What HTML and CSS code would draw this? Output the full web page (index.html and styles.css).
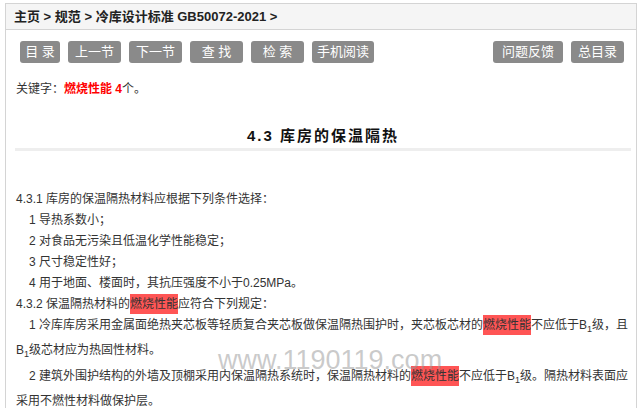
FILE: index.html
```html
<!DOCTYPE html>
<html>
<head>
    <meta charset="utf-8">
    <title>冷库设计标准 GB50072-2021</title>
    <link rel="stylesheet" href="styles.css">
</head>
<body>
    <div class="wrap">
        <div class="crumb">主页 &gt; 规范 &gt; 冷库设计标准 GB50072-2021 &gt;</div>

        <div class="tools">
            <div class="tools-left">
                <a class="btn btn-short" href="#">目 录</a>
                <a class="btn" href="#">上一节</a>
                <a class="btn" href="#">下一节</a>
                <a class="btn" href="#">查 找</a>
                <a class="btn" href="#">检 索</a>
                <a class="btn btn-mid" href="#">手机阅读</a>
            </div>
            <div class="tools-right">
                <a class="btn btn-wide" href="#">问题反馈</a>
                <a class="btn" href="#">总目录</a>
            </div>
        </div>

        <div class="keyword">关键字：<b>燃烧性能 4</b>个。</div>

        <h2 class="title">4.3 库房的保温隔热</h2>

        <div class="content">
            <p>4.3.1 库房的保温隔热材料应根据下列条件选择：</p>
            <p class="ind">1 导热系数小；</p>
            <p class="ind">2 对食品无污染且低温化学性能稳定；</p>
            <p class="ind">3 尺寸稳定性好；</p>
            <p class="ind">4 用于地面、楼面时，其抗压强度不小于0.25MPa。</p>
            <p>4.3.2 保温隔热材料的<span class="hl">燃烧性能</span>应符合下列规定：</p>
            <p class="ind">1 冷库库房采用金属面绝热夹芯板等轻质复合夹芯板做保温隔热围护时，夹芯板芯材的<span class="hl">燃烧性能</span>不应低于B<sub>1</sub>级，且B<sub>1</sub>级芯材应为热固性材料。</p>
            <p class="ind">2 建筑外围护结构的外墙及顶棚采用内保温隔热系统时，保温隔热材料的<span class="hl">燃烧性能</span>不应低于B<sub>1</sub>级。隔热材料表面应采用不燃性材料做保护层。</p>
        </div>

        <div class="watermark">www.1190119.com</div>
    </div>
</body>
</html>
```

FILE: styles.css
```css
body {
    margin: 0;
    font-family: "Liberation Sans", "Noto Sans CJK SC", sans-serif;
    color: #333;
    background: #fff;
}
.wrap {
    position: relative;
    margin: 3px 0 0 5px;
    width: 630px;
    height: 420px;
    border: 1px solid #d4d4d4;
}
.crumb {
    height: 25px;
    line-height: 25px;
    padding-left: 8px;
    background: #f5f5f5;
    border-bottom: 1px solid #d4d4d4;
    font-size: 13px;
    font-weight: bold;
    color: #222;
}
.tools {
    display: flex;
    justify-content: space-between;
    margin-top: 11px;
    padding: 0 12px 0 14px;
}
.tools-left,
.tools-right {
    display: flex;
    gap: 8px;
}
.btn {
    display: block;
    width: 53px;
    height: 22px;
    line-height: 22px;
    text-align: center;
    font-size: 13px;
    color: #fff;
    background: #8a8a8a;
    border-radius: 3px;
    text-decoration: none;
}
.btn-short {
    width: 40px;
}
.btn-mid {
    width: 62px;
}
.btn-wide {
    width: 70px;
}
.keyword {
    margin-top: 17px;
    padding-left: 10px;
    font-size: 12px;
    line-height: 18px;
}
.keyword b {
    color: #f00;
}
.title {
    margin: 26px 5px 0 9px;
    padding-bottom: 0;
    border-bottom: 3px solid #eee;
    text-align: center;
    font-size: 15px;
    line-height: 24px;
    letter-spacing: 2px;
    color: #111;
}
.content {
    margin-top: 38px;
    padding: 0 3px 0 10px;
    font-size: 12px;
    line-height: 21px;
}
.content p {
    margin: 0;
}
.content .ind {
    text-indent: 13px;
}
.hl {
    background: #f55;
    padding: 3px 0;
}
sub {
    font-size: 9px;
}
.watermark {
    position: absolute;
    left: 212px;
    top: 343px;
    font-size: 27px;
    line-height: 27px;
    color: rgba(150, 150, 150, 0.5);
    pointer-events: none;
}
```
